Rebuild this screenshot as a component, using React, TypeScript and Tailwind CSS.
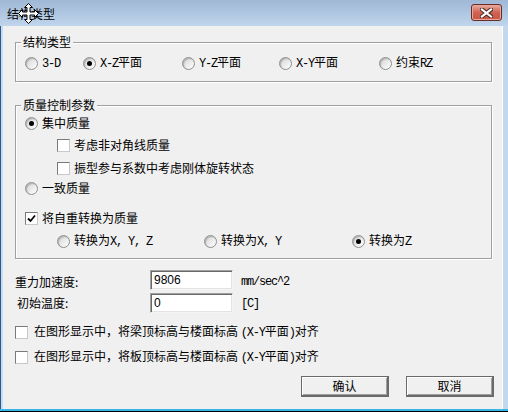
import React from "react";

const cjk = "font-[family-name:'Noto_Sans_CJK_SC',sans-serif]";

// SimSun-like narrow latin run
function M({ children }: { children: React.ReactNode }) {
  return (
    <span className="font-[family-name:'Liberation_Mono','Noto_Sans_CJK_SC',monospace] tracking-[-1.2px]">
      {children}
    </span>
  );
}

function Radio({ checked = false }: { checked?: boolean }) {
  return (
    <span className="w-[13px] h-[13px] shrink-0 rounded-full border border-[#8e8f8f] bg-linear-to-br from-[#d4d4d4] to-white flex items-center justify-center shadow-[inset_1px_1px_1px_#b0b0b0]">
      {checked && <span className="w-[5px] h-[5px] rounded-full bg-black" />}
    </span>
  );
}

function Check({ checked = false }: { checked?: boolean }) {
  return (
    <span className="w-[13px] h-[13px] shrink-0 border border-t-[#7a7a7a] border-l-[#7a7a7a] border-r-[#c8c8c8] border-b-[#c8c8c8] bg-white flex items-center justify-center">
      {checked && (
        <svg width="9" height="9" viewBox="0 0 9 9">
          <path d="M1 4.5 L3.5 7 L8 1.5" fill="none" stroke="#000" strokeWidth="1.8" />
        </svg>
      )}
    </span>
  );
}

function Option({
  kind,
  checked,
  children,
  className = "",
}: {
  kind: "radio" | "check";
  checked?: boolean;
  children: React.ReactNode;
  className?: string;
}) {
  return (
    <div className={`flex items-center gap-[4px] h-[16px] leading-[16px] ${className}`}>
      {kind === "radio" ? <Radio checked={checked} /> : <Check checked={checked} />}
      <span className="whitespace-nowrap">{children}</span>
    </div>
  );
}

const groupBox =
  "border border-[#a0a0a0] shadow-[inset_1px_1px_0_#fff,1px_1px_0_#fff] mr-[2px]";

function TextBox({ value }: { value: string }) {
  return (
    <div className="w-[83px] h-[20px] bg-white border border-t-[#a0a0a0] border-l-[#a0a0a0] border-r-[#f4f4f4] border-b-[#f4f4f4] shadow-[inset_1px_1px_0_#696969,inset_-1px_-1px_0_#e3e3e3] pl-[3px] pt-[1px] font-[family-name:'Liberation_Sans',sans-serif] text-[12px] leading-[16px]">
      {value}
    </div>
  );
}

function Btn({ children }: { children: React.ReactNode }) {
  return (
    <button className="w-[88px] h-[21px] bg-[#f0f0f0] border border-[#6a6a6a] border-r-2 border-b-2 shadow-[inset_1px_1px_0_#fff,inset_-1px_-1px_0_#a0a0a0] text-[12px] leading-[16px]">
      {children}
    </button>
  );
}

export default function App() {
  return (
    <div
      className={`w-[508px] h-[412px] relative overflow-hidden flex flex-col bg-[#c3d7ed] border-b border-black text-[12px] text-black ${cjk}`}
    >
      {/* title bar */}
      <div className="h-[26px] shrink-0 flex items-center bg-linear-to-b from-[#9fb8d6] to-[#c0d5ec] pl-[7px] pr-[6px]">
        <span className="flex-1 leading-[16px] pt-[1px]">结构类型</span>
        <div className="w-[31px] h-[17px] -mt-[1px] rounded-[3px] border border-[#6a2a22] bg-linear-to-b from-[#e6aaa0] via-[#cf6253] to-[#c75645] shadow-[inset_0_0_0_1px_#e8a79c] flex items-center justify-center">
          <svg width="13" height="10" viewBox="0 0 13 10">
            <path d="M2 1.5 L11 8.5 M11 1.5 L2 8.5" stroke="#4b2a26" strokeWidth="4.2" strokeLinecap="square" />
            <path d="M2 1.5 L11 8.5 M11 1.5 L2 8.5" stroke="#fff" strokeWidth="2.2" strokeLinecap="square" />
          </svg>
        </div>
      </div>

      {/* move cursor */}
      <svg className="absolute left-[18px] top-[3px]" width="21" height="21" viewBox="0 0 21 21">
        <polygon
          points="10.5,0.5 14.5,4.5 12,4.5 12,9 16.5,9 16.5,6.5 20.5,10.5 16.5,14.5 16.5,12 12,12 12,16.5 14.5,16.5 10.5,20.5 6.5,16.5 9,16.5 9,12 4.5,12 4.5,14.5 0.5,10.5 4.5,6.5 4.5,9 9,9 9,4.5 6.5,4.5"
          fill="#fff"
          stroke="#000"
          strokeWidth="1"
        />
      </svg>

      <div className="flex-1 flex">
        <div className="w-[3px] border-l border-[#2a5a8e] bg-[#c8ddf2]" />
        <div className="flex-1 bg-[#f0f0f0] flex flex-col pl-[12px] pr-[8px]">
          {/* 结构类型 */}
          <fieldset className={`mt-[8px] pb-[10px] ${groupBox}`}>
            <legend className="ml-[5px] px-[2px] leading-[16px] bg-[#f0f0f0]">结构类型</legend>
            <div className="flex mt-[5px] pl-[9px]">
              <Option kind="radio" className="w-[58px]"><M>3-D</M></Option>
              <Option kind="radio" checked className="w-[99px]"><M>X-Z</M>平面</Option>
              <Option kind="radio" className="w-[97px]"><M>Y-Z</M>平面</Option>
              <Option kind="radio" className="w-[100px]"><M>X-Y</M>平面</Option>
              <Option kind="radio">约束<M>RZ</M></Option>
            </div>
          </fieldset>

          {/* 质量控制参数 */}
          <fieldset className={`mt-[15px] pb-[9px] ${groupBox}`}>
            <legend className="ml-[5px] px-[2px] leading-[16px] bg-[#f0f0f0]">质量控制参数</legend>
            <div className="flex flex-col pl-[9px]">
              <Option kind="radio" checked className="mt-[2px]">集中质量</Option>
              <Option kind="check" className="mt-[6px] pl-[32px]">考虑非对角线质量</Option>
              <Option kind="check" className="mt-[7px] pl-[32px]">振型参与系数中考虑刚体旋转状态</Option>
              <Option kind="radio" className="mt-[4px]">一致质量</Option>
              <Option kind="check" checked className="mt-[14px]">将自重转换为质量</Option>
              <div className="flex mt-[7px] pl-[32px]">
                <Option kind="radio" className="w-[147px]">转换为<M>X, Y, Z</M></Option>
                <Option kind="radio" className="w-[148px]">转换为<M>X, Y</M></Option>
                <Option kind="radio" checked>转换为<M>Z</M></Option>
              </div>
            </div>
          </fieldset>

          {/* inputs */}
          <div className="flex items-center mt-[11px] h-[20px]">
            <span className="w-[135px] leading-[16px] mt-[3px]">重力加速度:</span>
            <TextBox value="9806" />
            <span className="ml-[8px] mt-[2px]"><M>mm/sec^2</M></span>
          </div>
          <div className="flex items-center mt-[3px] h-[20px]">
            <span className="w-[135px] pl-[2px] leading-[16px]">初始温度:</span>
            <TextBox value="0" />
            <span className="ml-[8px]"><M>[C]</M></span>
          </div>

          <Option kind="check" className="mt-[11px] gap-[6px]">
            在图形显示中，将梁顶标高与楼面标高 <M>(X-Y</M>平面<M>)</M>对齐
          </Option>
          <Option kind="check" className="mt-[9px] gap-[6px]">
            在图形显示中，将板顶标高与楼面标高 <M>(X-Y</M>平面<M>)</M>对齐
          </Option>

          <div className="flex justify-end gap-[17px] mt-[11px]">
            <Btn>确认</Btn>
            <Btn>取消</Btn>
          </div>
        </div>
        <div className="w-[6px] border-l border-white bg-[#c3d7ed]" />
      </div>
      <div className="h-[2px] shrink-0 bg-[#36b6e6]" />
    </div>
  );
}
